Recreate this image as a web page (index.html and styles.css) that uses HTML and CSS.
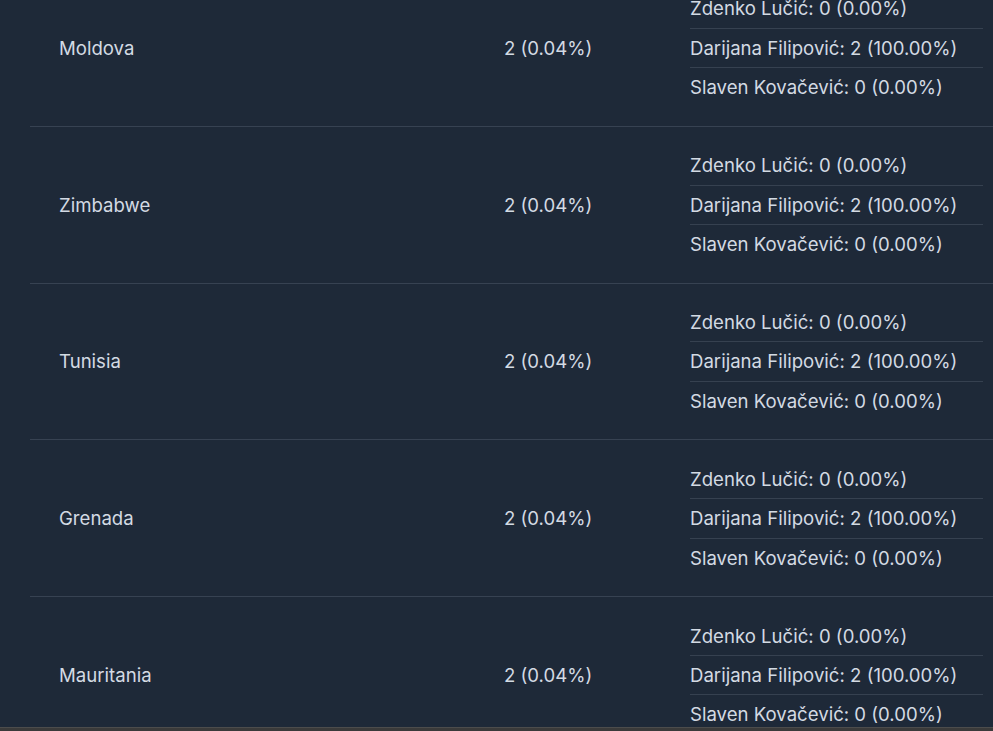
FILE: index.html
```html
<!DOCTYPE html>
<html lang="en">
<head>
    <meta charset="UTF-8">
    <meta name="viewport" content="width=device-width, initial-scale=1.0">
    <title>Country Breakdown</title>
    <link rel="stylesheet" href="styles.css">
</head>
<body>
    <div class="viewport">
        <table class="country-table">
            <tbody id="rows"></tbody>
        </table>
    </div>
    <div class="statusbar"></div>
    <script>
        const countries = ['Moldova', 'Zimbabwe', 'Tunisia', 'Grenada', 'Mauritania'];
        const agents = [
            { name: 'Zdenko Lučić', count: 0, pct: '0.00' },
            { name: 'Darijana Filipović', count: 2, pct: '100.00' },
            { name: 'Slaven Kovačević', count: 0, pct: '0.00' }
        ];
        const tbody = document.getElementById('rows');
        countries.forEach(function(country) {
            const tr = document.createElement('tr');
            let items = agents.map(a => `<li>${a.name}: ${a.count} (${a.pct}%)</li>`).join('');
            tr.innerHTML = `
                <td class="col-country">${country}</td>
                <td class="col-total">2 (0.04%)</td>
                <td class="col-agents"><ul class="agent-list">${items}</ul></td>
            `;
            tbody.appendChild(tr);
        });
    </script>
</body>
</html>
```

FILE: styles.css
```css
html, body { margin: 0; padding: 0; }
body { font-family: Inter, "Noto Sans", sans-serif; background-color: #1e2938; color: #d3dae3; overflow: hidden; height: 731px; }
.viewport { height: 727px; overflow: hidden; }
.country-table { width: 982px; margin-left: 30px; margin-top: -30px; border-collapse: collapse; table-layout: fixed; font-size: 18.6px; line-height: 26.4px; }
.country-table tr { border-bottom: 1px solid #374252; }
.country-table td { padding: 19.3px 0 19.3px 29px; vertical-align: middle; }
.col-country { width: 416px; }
.col-total { width: 157px; }
.col-agents { padding-right: 29px !important; }
.agent-list { list-style: none; margin: 0; padding: 0; }
.agent-list li { padding: 6px 0; border-bottom: 1px solid #364150; }
.agent-list li:last-child { border-bottom: none; }
.statusbar { height: 4px; background-color: #3a3a3a; border-top: 1px solid #4c4c4c; }
```
